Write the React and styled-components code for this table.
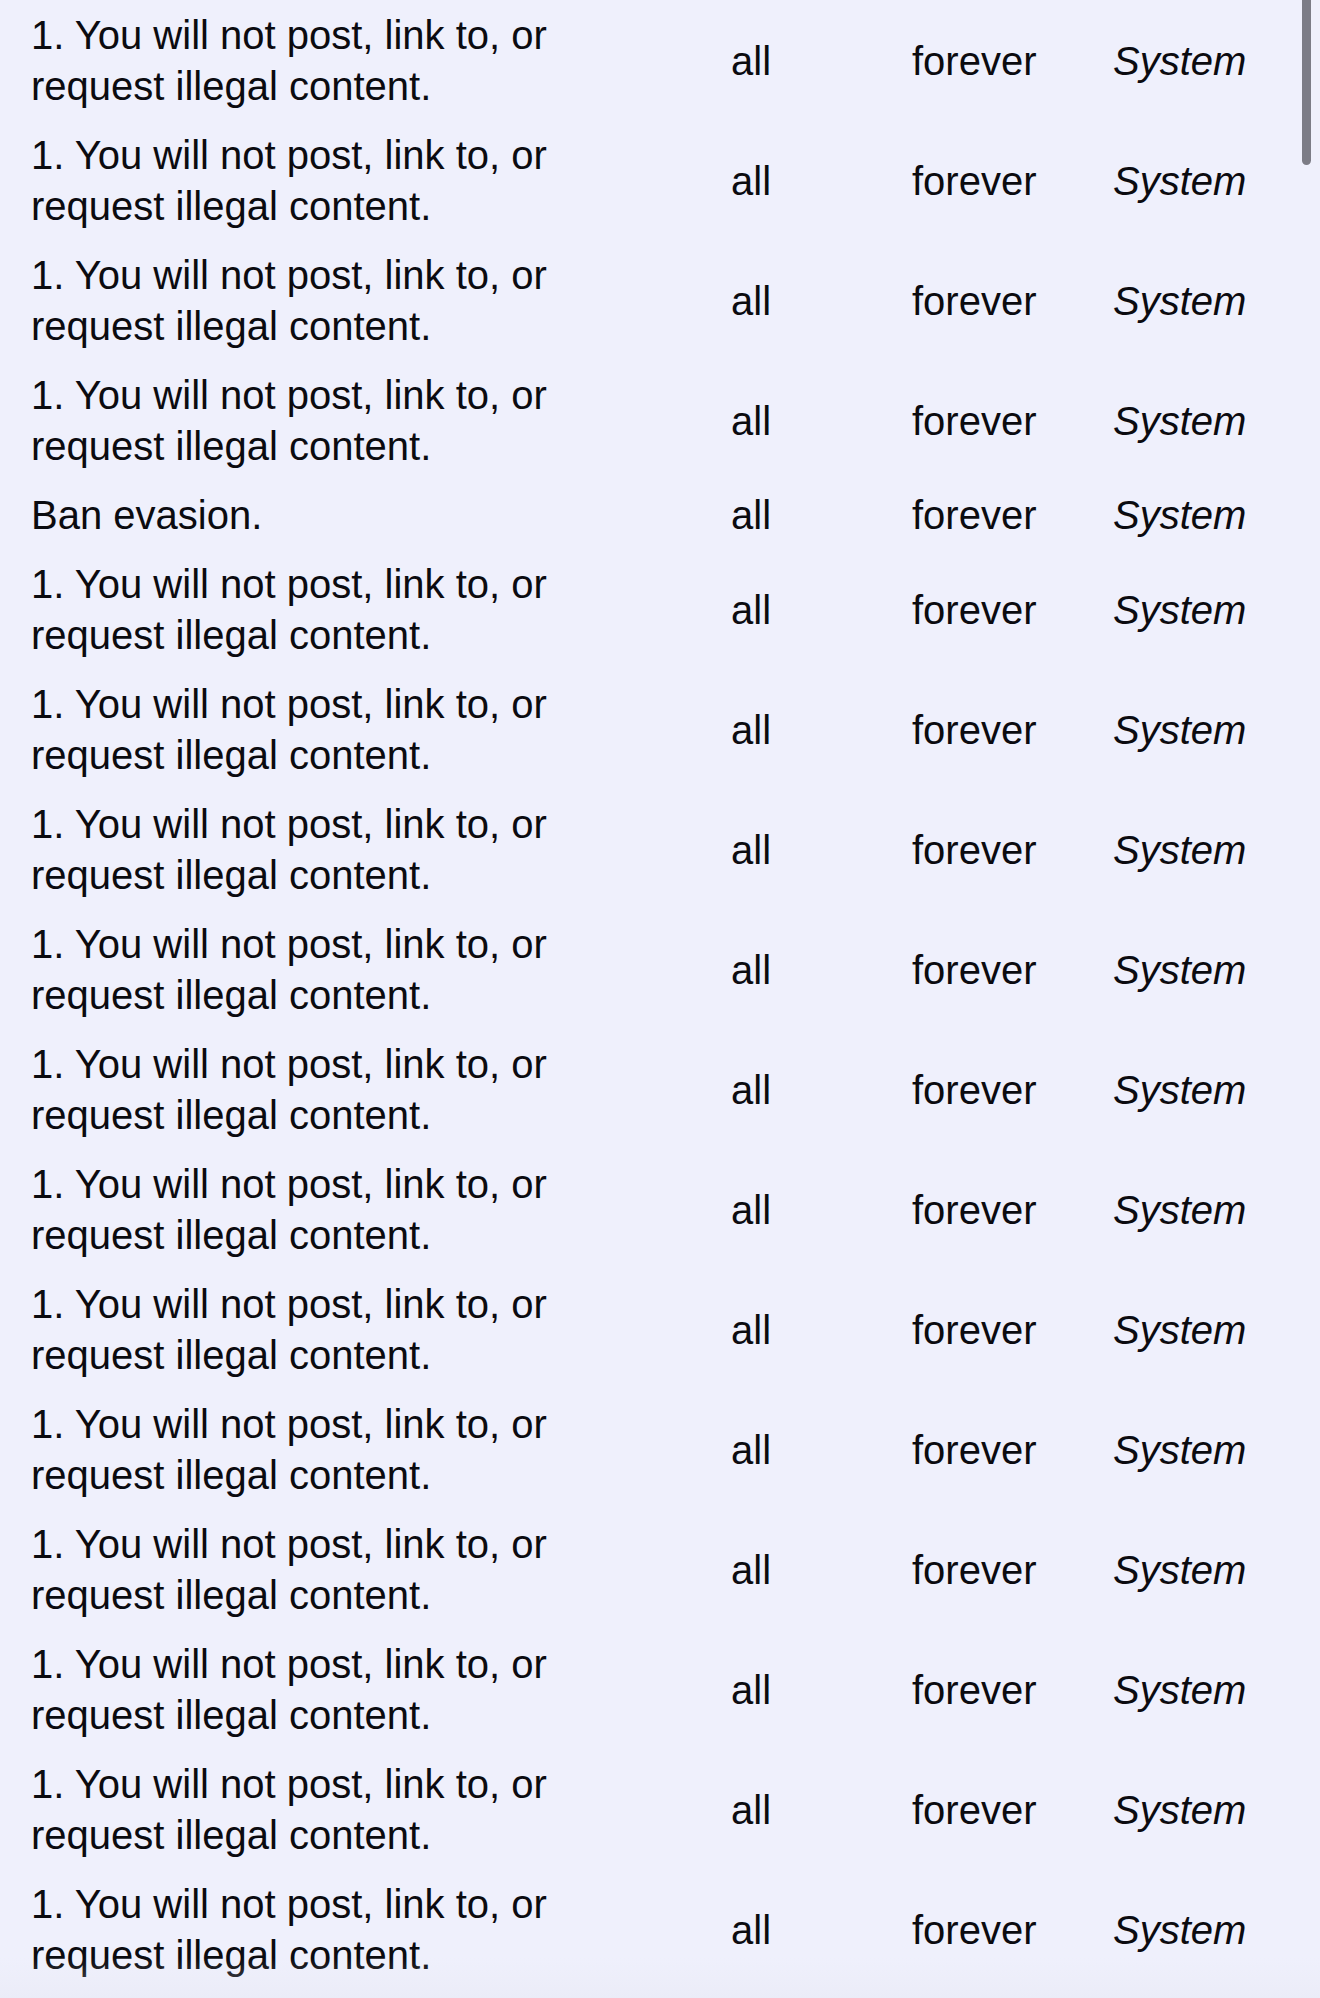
import React from 'react';
import styled, { createGlobalStyle } from 'styled-components';

const GlobalStyle = createGlobalStyle`
  html, body {
    margin: 0;
    padding: 0;
    background-color: #eff0fc;
  }
`;

const Page = styled.div`
  width: 1320px;
  min-height: 1998px;
  box-sizing: border-box;
  padding-top: 1px;
  background-color: #eff0fc;
  font-family: 'Liberation Sans', Arial, Helvetica, sans-serif;
  color: #0b0b10;
  position: relative;
  overflow: hidden;
`;

const LogTable = styled.div`
  display: flex;
  flex-direction: column;
`;

const Row = styled.div`
  display: grid;
  grid-template-columns: 600px 81px 101px auto;
  column-gap: 100px;
  align-items: center;
  padding: 9px 0 9px 31px;
  font-size: 40px;
  line-height: 51px;
`;

const Reason = styled.div`
  white-space: normal;
`;

const Cell = styled.div`
  white-space: nowrap;
  font-style: ${(p) => (p.$italic ? 'italic' : 'normal')};
`;

const ScrollThumb = styled.div`
  position: absolute;
  top: 0;
  right: 9px;
  width: 9px;
  height: 165px;
  border-radius: 0 0 5px 5px;
  background-color: #7c7c86;
`;

const BottomFade = styled.div`
  position: absolute;
  left: 0;
  right: 0;
  bottom: 0;
  height: 40px;
  pointer-events: none;
  background: linear-gradient(
    to bottom,
    rgba(239, 240, 252, 0) 0%,
    rgba(228, 229, 240, 0.35) 100%
  );
`;

const illegal = '1. You will not post, link to, or request illegal content.';

const bans = [
  illegal,
  illegal,
  illegal,
  illegal,
  'Ban evasion.',
  illegal,
  illegal,
  illegal,
  illegal,
  illegal,
  illegal,
  illegal,
  illegal,
  illegal,
  illegal,
  illegal,
  illegal,
];

export default function App() {
  return (
    <>
      <GlobalStyle />
      <Page>
        <LogTable>
          {bans.map((reason, i) => (
            <Row key={i}>
              <Reason>{reason}</Reason>
              <Cell>all</Cell>
              <Cell>forever</Cell>
              <Cell $italic>System</Cell>
            </Row>
          ))}
        </LogTable>
        <ScrollThumb />
        <BottomFade />
      </Page>
    </>
  );
}
